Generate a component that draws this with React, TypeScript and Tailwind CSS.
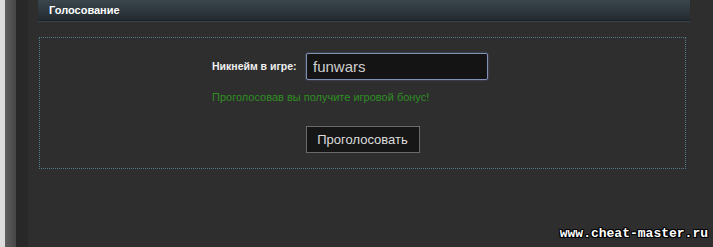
import React, { useState } from 'react';

export default function App() {
  const [nick, setNick] = useState('funwars');

  return (
    <div className="w-[713px] h-[247px] flex bg-[#2e2e2e] overflow-hidden relative" style={{ fontFamily: '"Liberation Sans", Arial, sans-serif' }}>
      <div className="w-[5px] bg-[#dcdcdc]" />
      <div className="w-[11px] bg-gradient-to-r from-[#5e5e5e] to-[#474747]" />
      <div className="w-[12px] bg-[#282828]" />
      <div className="flex-1 pl-[10px] pr-[23px]">
        <div className="h-[21px] flex items-center pl-[11px] bg-gradient-to-b from-[#3a464d] to-[#232b30] border-b border-[#1b2225] shadow-[0_1px_0_#3a4347]">
          <span className="text-[11px] font-bold text-white">Голосование</span>
        </div>
        <div className="mt-[16px] ml-[1px] w-[647px] h-[132px] border border-dotted border-[#52798a] pt-[15px]">
          <div className="flex items-center pl-[172px]">
            <label className="w-[94px] text-[10.5px] font-bold text-[#f0f0f0]">Никнейм в игре:</label>
            <input
              value={nick}
              onChange={(e) => setNick(e.target.value)}
              className="w-[182px] h-[27px] px-[6px] bg-[#141414] border border-[#8391b6] rounded-[2px] shadow-[0_0_2px_#5c6a8a] text-[15px] text-[#cfcfcf] outline-none"
            />
          </div>
          <p className="mt-[10px] pl-[172px] text-[11px] leading-[14px] text-[#2f8f22]">Проголосовав вы получите игровой бонус!</p>
          <div className="mt-[22px] flex justify-center">
            <button className="w-[114px] h-[27px] bg-[#161616] border border-[#6a6a6a] text-[13px] text-[#dcdcdc]">Проголосовать</button>
          </div>
        </div>
      </div>
      <span
        className="absolute right-[5px] bottom-[4px] text-[13px] font-bold text-white"
        style={{ fontFamily: '"Liberation Mono", "Courier New", monospace', textShadow: '1px 0 0 #000, -1px 0 0 #000, 0 1px 0 #000, 0 -1px 0 #000, 1px 1px 0 #000, -1px -1px 0 #000, 1px -1px 0 #000, -1px 1px 0 #000' }}
      >
        www.cheat-master.ru
      </span>
    </div>
  );
}
